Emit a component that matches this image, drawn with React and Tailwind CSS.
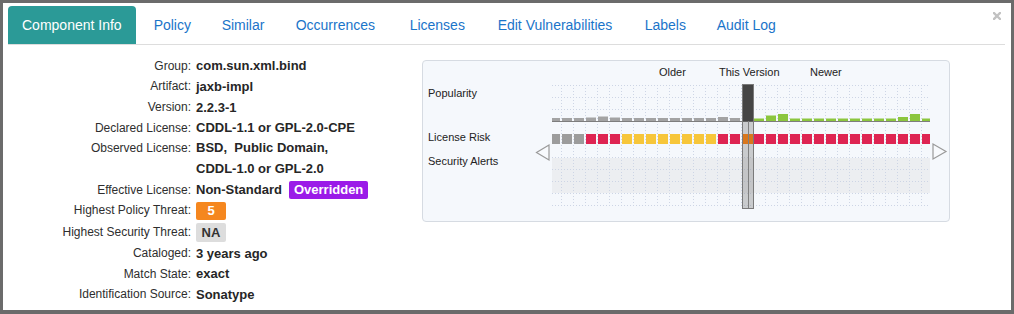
import React from "react";

const grayH = [3, 3, 3, 3.5, 4.5, 3.5, 3, 3, 3, 3, 3, 3, 3, 3, 4, 3];
const greenH = [2.5, 5.5, 7, 2.5, 2.5, 2.5, 2.5, 2.5, 2.5, 2.5, 2.5, 2.5, 4, 7, 2.5];
const cols = Array.from({ length: 32 }, (_, j) => j);

function riskColor(j) {
  if (j < 3) return "#9c9c9c";
  if (j < 6) return "#de2452";
  if (j < 14) return "#f7c63a";
  if (j === 16) return "#e58019";
  return "#de2452";
}

function Chart() {
  const dot = { stroke: "#cdd5e5", strokeWidth: 1, strokeDasharray: "1 2" };
  return (
    <svg width="418" height="159" viewBox="0 0 418 159" className="block">
      <defs>
        <clipPath id="gridclip">
          <rect x="22" y="0" width="378" height="159" />
        </clipPath>
      </defs>
      <text x="129" y="15" fontFamily="'Liberation Sans', Arial, sans-serif" fontSize="11" fill="#222">Older</text>
      <text x="189" y="15" fontFamily="'Liberation Sans', Arial, sans-serif" fontSize="11" fill="#222">This Version</text>
      <text x="280" y="15" fontFamily="'Liberation Sans', Arial, sans-serif" fontSize="11" fill="#222">Newer</text>
      <g clipPath="url(#gridclip)">
        <rect x="22" y="97" width="378" height="35" fill="#eceef1" />
        {[24, 36, 48, 96, 108, 120, 132, 144].map((y) => (
          <line key={"h" + y} x1="22" x2="400" y1={y + 0.5} y2={y + 0.5} {...dot} />
        ))}
        {cols.map((j) => (
          <line key={"v" + j} x1={31.5 + 12 * j} x2={31.5 + 12 * j} y1="24" y2="145" {...dot} />
        ))}
        {grayH.map((h, j) => (
          <rect key={"g" + j} x={20 + 12 * j} y={60 - h} width="10" height={h} fill="#a3a3a3" />
        ))}
        {greenH.map((h, i) => (
          <rect key={"gr" + i} x={20 + 12 * (i + 17)} y={60 - h} width="10" height={h} fill="#8cc63e" />
        ))}
        <line x1="22" x2="400" y1="60.5" y2="60.5" stroke="#7d7d7d" strokeWidth="1" />
        {cols.map((j) => (
          <rect key={"r" + j} x={20 + 12 * j} y="73" width="10" height="10" fill={riskColor(j)} />
        ))}
        <rect x="212.5" y="23.5" width="11" height="124" fill="rgba(140,140,140,0.42)" stroke="#7a7a7a" strokeWidth="1" />
        <rect x="213" y="24" width="10" height="36.5" fill="#454545" />
        <rect x="213" y="73" width="10" height="10" fill="#d9771c" />
        <line x1="218.5" x2="218.5" y1="60" y2="147" stroke="#808080" strokeWidth="1" />
      </g>
      <polygon points="19,84 6.5,91.5 19,99" fill="#f8fafd" stroke="#9a9a9a" strokeWidth="1.2" />
      <polygon points="403,83 416,90.5 403,98" fill="#f8fafd" stroke="#9a9a9a" strokeWidth="1.2" />
    </svg>
  );
}

const rows = [
  ["Group:", "com.sun.xml.bind"],
  ["Artifact:", "jaxb-impl"],
  ["Version:", "2.2.3-1"],
  ["Declared License:", "CDDL-1.1 or GPL-2.0-CPE"],
];

const rows2 = [
  ["Cataloged:", "3 years ago"],
  ["Match State:", "exact"],
  ["Identification Source:", "Sonatype"],
];

function Label({ children }) {
  return <div className="text-right text-[12px] text-[#2e2e2e] h-[20.7px] leading-[20.7px]">{children}</div>;
}

function Value({ children }) {
  return (
    <div className="flex items-center gap-[7px] h-[20.7px] text-[13px] font-bold text-[#262626] whitespace-nowrap">
      {children}
    </div>
  );
}

export default function App() {
  return (
    <div
      className="relative w-[1014px] h-[314px] bg-white border-t-[3px] border-l-[3px] border-r-[3px] border-b-[4px] border-[#6b6b6b] pl-[5px] pr-[6px] overflow-hidden"
      style={{ fontFamily: "'Liberation Sans', Arial, Helvetica, sans-serif" }}
    >
      <div className="pt-[3px] border-b border-[#dddddd] flex items-end">
        <div className="h-[38px] px-[14px] mr-[3px] rounded-t-[4px] bg-[#2b9a97] text-white text-[14px] flex items-center">
          Component Info
        </div>
        <div className="w-[68px] h-[38px] pl-[15px] text-[#1a74c9] text-[14px] flex items-center">Policy</div>
        <div className="w-[74px] h-[38px] pl-[15px] text-[#1a74c9] text-[14px] flex items-center">Similar</div>
        <div className="w-[114px] h-[38px] pl-[15px] text-[#1a74c9] text-[14px] flex items-center">Occurrences</div>
        <div className="w-[88px] h-[38px] pl-[15px] text-[#1a74c9] text-[14px] flex items-center">Licenses</div>
        <div className="w-[147px] h-[38px] pl-[15px] text-[#1a74c9] text-[14px] flex items-center">Edit Vulnerabilities</div>
        <div className="w-[72px] h-[38px] pl-[15px] text-[#1a74c9] text-[14px] flex items-center">Labels</div>
        <div className="h-[38px] px-[15px] text-[#1a74c9] text-[14px] flex items-center">Audit Log</div>
      </div>
      <svg className="absolute left-[990px] top-[9px]" width="8" height="8" viewBox="0 0 8 8">
        <path d="M1 1 L7 7 M7 1 L1 7" stroke="#c2c2c2" strokeWidth="2.4" strokeLinecap="square" />
      </svg>

      <div className="flex">
        <div className="w-[414px] pt-[10.6px]">
          <div className="grid grid-cols-[183px_1fr] gap-x-[5px]">
            {rows.map(([l, v]) => (
              <React.Fragment key={l}>
                <Label>{l}</Label>
                <Value>{v}</Value>
              </React.Fragment>
            ))}
            <Label>Observed License:</Label>
            <div className="text-[13px] font-bold text-[#262626] leading-[20.7px] whitespace-pre">
              <div>{"BSD,  Public Domain,"}</div>
              <div>CDDL-1.0 or GPL-2.0</div>
            </div>
            <Label>Effective License:</Label>
            <Value>
              <span>Non-Standard</span>
              <span className="h-[18px] leading-[18px] px-[5px] rounded-[2px] bg-[#9b1be8] text-white">Overridden</span>
            </Value>
            <div className="text-right text-[12px] text-[#2e2e2e] h-[21.5px] leading-[21.5px]">Highest Policy Threat:</div>
            <div className="flex items-center h-[21.5px]">
              <span className="w-[30px] h-[18px] leading-[18px] text-center rounded-[2px] bg-[#f5871f] text-white text-[13px] font-bold">5</span>
            </div>
            <div className="text-right text-[12px] text-[#2e2e2e] h-[21px] leading-[21px]">Highest Security Threat:</div>
            <div className="flex items-center h-[21px]">
              <span className="w-[30px] h-[19px] leading-[19px] text-center rounded-[2px] bg-[#dddddd] text-[#333] text-[13px] font-bold">NA</span>
            </div>
            {rows2.map(([l, v]) => (
              <React.Fragment key={l}>
                <Label>{l}</Label>
                <Value>{v}</Value>
              </React.Fragment>
            ))}
          </div>
        </div>

        <div className="mt-[15px] w-[528px] h-[162px] rounded-[4px] border border-[#d6dbe2] bg-[#f5f8fc] flex">
          <div className="w-[107px] pl-[5px] text-[11px] text-[#222] leading-[13px]">
            <div className="mt-[25.8px]">Popularity</div>
            <div className="mt-[31px]">License Risk</div>
            <div className="mt-[11.4px]">Security Alerts</div>
          </div>
          <Chart />
        </div>
      </div>
    </div>
  );
}
